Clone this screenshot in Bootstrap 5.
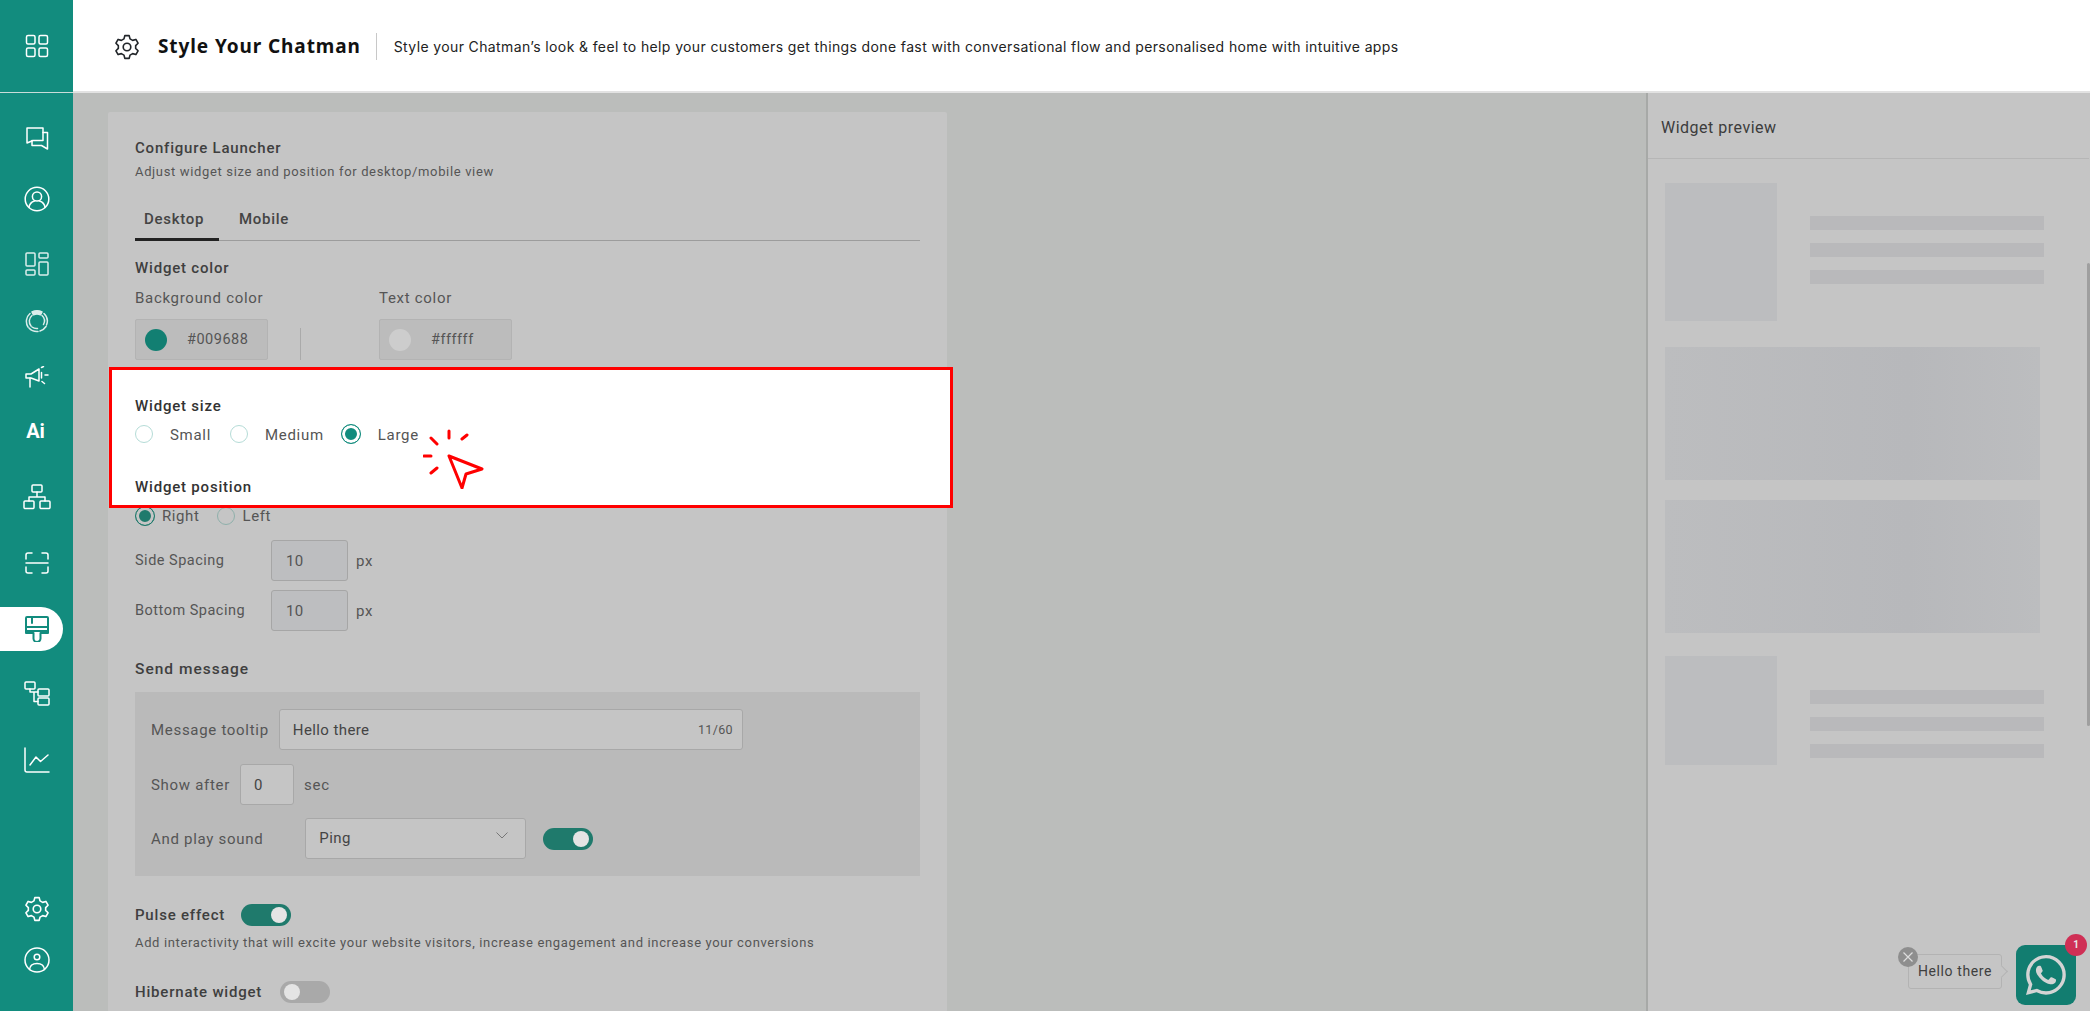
<!DOCTYPE html>
<html lang="en"><head><meta charset="utf-8"><title>Style Your Chatman</title>
<link href="https://cdn.jsdelivr.net/npm/bootstrap@5.3.0/dist/css/bootstrap.min.css" rel="stylesheet">
<style>
html,body{height:100%;overflow:hidden}
body{font-family:Roboto,"Liberation Sans",sans-serif;font-size:14px;color:#444;background:#bbbdbb}
svg{display:block}
.shell{height:1011px}
.rail{width:73px;background:#128c7e;flex:none}
.rail-head{height:93px;border-bottom:1px solid #c9dcd9}
.rail-item{height:44px;width:63px;display:flex;align-items:center;justify-content:center;color:#fff;padding-left:10px}
.rail-list .rail-item:nth-child(1){margin-top:23px}
.rail-list .rail-item:nth-child(2){margin-top:17px}
.rail-list .rail-item:nth-child(3){margin-top:21px}
.rail-list .rail-item:nth-child(4){margin-top:13px}
.rail-list .rail-item:nth-child(5){margin-top:12px}
.rail-list .rail-item:nth-child(6){margin-top:10px}
.rail-list .rail-item:nth-child(7){margin-top:22px}
.rail-list .rail-item:nth-child(8){margin-top:22px}
.rail-list .rail-item:nth-child(9){margin-top:22px}
.rail-list .rail-item:nth-child(10){margin-top:20px}
.rail-list .rail-item:nth-child(11){margin-top:23px}
.rail-active{background:#fff;color:#128c7e;border-radius:0 22px 22px 0}
.rail-ai{font-weight:700;font-size:20px;line-height:1;padding-left:8px}
.rail-foot{margin-top:auto;padding-bottom:29px;gap:7px}
.topbar{height:93px;background:#fff;border-bottom:2px solid #e2e2e2;padding:2px 0 0 41px;flex:none}
.top-title{font-family:"Noto Sans",sans-serif;font-weight:700;font-size:19px;letter-spacing:.9px;color:#111;margin-left:18px;padding-right:15px;line-height:27px;white-space:nowrap}
.top-sub{font-family:Inter,"Open Sans",sans-serif;font-size:14px;letter-spacing:.375px;color:#222;border-left:1px solid #c8c8c8;padding-left:17px;line-height:27px;white-space:nowrap}
.work{min-height:0;overflow:hidden}
.cfg-col{width:1573px;padding:19px 0 0 35px;flex:none}
.cfg-card{width:839px;height:900px;background:#c5c5c5;padding:26px 27px 0 27px;border-radius:2px}
.h-main{font-size:15px;font-weight:500;line-height:20px;letter-spacing:.8px;color:#3f3f3f}
.h-sub{font-size:13px;line-height:16px;margin-top:6px;color:#555;letter-spacing:.65px;white-space:nowrap}
.tabbar.nav{margin-top:20px;height:41px;border-bottom:1px solid #9c9c9c;gap:0}
.tabbar .nav-link{color:#444;font-size:15px;font-weight:500;padding:0 15px 0 9px;height:41px;line-height:38px;margin-right:11px;border:0;letter-spacing:.7px;border-radius:0}
.tabbar .nav-link.active{border-bottom:3px solid #222;background:transparent;color:#444}
.sec-head{font-size:15px;font-weight:500;line-height:20px;color:#3f3f3f;letter-spacing:.8px}
.sec-head-lg{font-size:15.5px;letter-spacing:1px}
.sec-a{margin-top:17px}
.lab{font-size:15px;line-height:20px;color:#555;letter-spacing:.7px}
.lab-row{margin-top:10px}
.lab-first{width:244px}
.color-row{margin-top:11px;height:41px}
.swatch-box{width:133px;height:41px;background:#bcbcbc;border:1px solid #b3b3b3;border-radius:2px;padding-left:9px;gap:20px;font-size:14.5px;color:#555;letter-spacing:.5px}
.dot{width:22px;height:22px;border-radius:50%;flex:none}
.dot-teal{background:#127f72}
.dot-white{background:#cdcdcd}
.v-rule{width:1px;height:32px;background:#aaa;margin:9px 78px 0 32px}
.spot{position:relative;z-index:2;margin:7px -33px 0 -26px;height:141px;background:#fff;border:3px solid #f00;padding:26px 0 0 23px}
.spot .sec-head{color:#333}
.radios{margin-top:7px;height:24px;color:#555}
.form-check-input.rdo{width:18px;height:18px;margin:0 17px 3px 0;border:1px solid #b5dcd7;background-color:#fff;background-image:none;flex:none}
.form-check-input.rdo:checked{width:20px;height:20px;background-color:#128c7e;border:1px solid #128c7e;box-shadow:inset 0 0 0 3px #fff}
.spot .form-check-input.rdo-gap{margin-left:19px}
.spot .form-check-input.rdo-gap-b{margin-left:17px}
.spot-second{margin-top:30px}
.rad-dim{margin-top:-2px;height:20px;color:#555;letter-spacing:.6px}
.form-check-input.rdo-d{width:20px;height:20px;margin:0 7px 0 0;border:1px solid #8fb0ab;background-color:#c5c5c5;background-image:none;flex:none}
.form-check-input.rdo-d:checked{background-color:#1f7a6c;border:1px solid #1f7a6c;box-shadow:inset 0 0 0 3px #c5c5c5}
.form-check-input.rdo-off{margin-left:18px;width:18px;height:18px}
.sp-row{height:41px}
.sp-one{margin-top:14px}
.sp-two{margin-top:9px}
.sp-lab{width:136px;letter-spacing:.5px;font-size:14.500px}
.form-control.num{width:77px;height:41px;background:#bdbec0;border:1px solid #a6a6a6;border-radius:3px;color:#555;font-size:15px;padding:0 14px;margin-right:8px;letter-spacing:.3px}
.sec-b{margin-top:28px}
.send-box{margin-top:13px;height:184px;width:785px;background:#bababa;padding:17px 16px 0 16px}
.send-row{height:41px}
.send-two{margin-top:14px}
.send-three{margin-top:13px}
.tip-wrap{width:464px;margin-left:10px}
.form-control.flat{height:41px;background:#c5c5c5;border:1px solid #a8a8a8;border-radius:3px;color:#444;font-size:15px;padding:0 13px;letter-spacing:.4px}
.count{right:10px;top:12px;font-size:12.5px;line-height:18px;letter-spacing:.3px;color:#555;z-index:3}
.form-control.small-num{width:54px;margin:0 10px}
.form-select.pick{width:221px;height:41px;margin-left:42px;background-color:#c5c5c5;border:1px solid #a8a8a8;border-radius:3px;color:#444;font-size:15px;letter-spacing:.4px;padding:0 13px;background-size:12px 7px;background-position:right 17px top 13px;background-image:url("data:image/svg+xml,%3Csvg xmlns='http://www.w3.org/2000/svg' viewBox='0 0 12 7'%3E%3Cpath d='M.5.5 6 6 11.5.5' fill='none' stroke='%23777'/%3E%3C/svg%3E")}
.sw{display:inline-block;position:relative;width:50px;height:22px;border-radius:11px;background:#1f7a6c;flex:none}
.sw::after{content:"";position:absolute;top:3px;right:4px;width:16px;height:16px;border-radius:50%;background:#e4e4e4}
.sw-off{background:#a9a9a9}
.sw-off::after{right:auto;left:4px}
.sw-a{margin-left:17px}
.pulse-row{margin-top:28px;height:22px}
.ml-sw{margin-left:16px}
.ml-sw-b{margin-left:18px}
.desc{font-size:13px;line-height:16px;margin-top:9px;color:#555;letter-spacing:.65px;white-space:nowrap}
.hib-row{margin-top:30px;height:22px}
.pv-col{width:444px;background:#c5c5c5;border-left:2px solid #a7a9a7;position:relative;flex:none}
.pv-head{height:66px;padding:25px 0 0 13px;border-bottom:1px solid #b6b6b6;font-size:16px;line-height:20px;color:#3c3c3c;letter-spacing:.5px;width:441px}
.pv-thumb{position:absolute;top:170px;right:0;width:3px;height:463px;background:#9f9f9f;border-radius:2px}
.skel{padding:24px 0 0 17px;filter:blur(.7px)}
.sk-img{width:112px;height:138px;background:#bcbdbf;flex:none}
.sk-img-cut{height:109px}
.sk-lines{margin-left:33px;padding-top:33px;width:234px}
.sk-lines-b{padding-top:34px}
.sk-line{height:14px;background:#b9b9bb;margin-bottom:13px}
.sk-block{width:375px;height:133px;margin-top:26px;background:linear-gradient(90deg,#bcbdbf 0,#b7b8bb 65%,#bcbdbf 100%)}
.sk-block-2{margin-top:20px}
.sk-row-last{margin-top:23px}
.wa-tip{position:absolute;left:260px;top:861px;width:94px;height:35px;border:1px solid #b3b3b3;border-radius:3px;font-size:14px;line-height:33px;padding-left:9px;color:#3f3f3f;letter-spacing:.6px;white-space:nowrap}
.wa-tip::after{content:"";position:absolute;right:-5px;top:12px;width:9px;height:9px;background:#c5c5c5;border-top:1px solid #b3b3b3;border-right:1px solid #b3b3b3;transform:rotate(45deg)}
.wa-x{position:absolute;left:250px;top:854px;width:20px;height:20px;border-radius:50%;background:#8e8e8e;z-index:2;display:flex;align-items:center;justify-content:center}
.wa-btn{position:absolute;left:368px;top:852px;width:60px;height:60px;background:#127d70;border-radius:9px;display:flex;align-items:center;justify-content:center}
.wa-badge{position:absolute;left:417px;top:841px;width:22px;height:22px;border-radius:50%;background:#cf2f55;color:#e6e6e6;font-size:10px;font-weight:700;line-height:22px;text-align:center;z-index:2}
.cursor-mark{position:absolute;left:311px;top:58px;width:62px;height:61px}
.i{fill:none;stroke:currentColor;stroke-width:1.5;stroke-linejoin:round;stroke-linecap:round}
.i-teal{color:#128c7e;stroke-width:2}
.i-dim{opacity:.85}
</style></head>
<body>
<div class="shell d-flex">
  <nav class="rail d-flex flex-column">
    <div class="rail-head d-flex align-items-center justify-content-center">
      <svg class="i text-white" width="24" height="24" viewBox="0 0 24 24"><rect x="1.5" y="1.5" width="8.5" height="8.5" rx="1.5"/><rect x="14" y="1.5" width="8.5" height="8.5" rx="1.5"/><rect x="1.5" y="14" width="8.5" height="8.5" rx="1.5"/><rect x="14" y="14" width="8.5" height="8.5" rx="1.5"/></svg>
    </div>
    <div class="rail-list d-flex flex-column">
      <div class="rail-item"><svg class="i" width="24" height="24" viewBox="0 0 24 24"><path d="M2 2H18V14.5H8L2 17Z"/><path d="M18 6.5H22.5V23L16.5 19.5H7V14.5"/></svg></div>
      <div class="rail-item"><svg class="i" width="26" height="26" viewBox="0 0 26 26"><circle cx="13" cy="13" r="11.8"/><circle cx="13" cy="10.5" r="4.6"/><path d="M5 21.5C5.5 17.5 8.5 15.6 10.5 15M21 21.5C20.5 17.5 17.500 15.600 15.500 15"/></svg></div>
      <div class="rail-item"><svg class="i i-dim" width="24" height="24" viewBox="0 0 24 24"><rect x="1" y="1" width="9" height="13" rx="1"/><rect x="14" y="1" width="9" height="5" rx="1"/><rect x="1" y="18" width="9" height="5" rx="1"/><rect x="14" y="10" width="9" height="13" rx="1"/></svg></div>
      <div class="rail-item"><svg class="i i-dim" width="24" height="24" viewBox="0 0 24 24" stroke-width="1.100"><path d="M7 3A10.500 10.500 0 0 1 17 3L15.500 5.800A7.500 7.500 0 0 0 8.500 5.800Z" fill="currentColor"/><path d="M5 4.500A10.500 10.500 0 0 0 3 18M4 19A10.500 10.500 0 0 0 13 22.500M15 22A10.500 10.500 0 0 0 21 17.500M21.500 16A10.500 10.500 0 0 0 19 4.500"/><path d="M7 6.500A7.500 7.500 0 0 0 6 17M7 18A7.500 7.500 0 0 0 12.500 19.500M17 6.500A7.500 7.500 0 0 1 18.500 15.500"/></svg></div>
      <div class="rail-item"><svg class="i" width="24" height="22" viewBox="0 0 24 22"><path d="M1 8H6L14 3V15L6 12H1Z"/><path d="M5 12V21"/><path d="M16.500 1.500 18.500 0.500M20 9H23M17 15.500 19.500 17.500M16.500 6.500V12"/></svg></div>
      <div class="rail-item rail-ai">Ai</div>
      <div class="rail-item"><svg class="i" width="28" height="26" viewBox="0 0 28 26"><rect x="9" y="1" width="10" height="7" rx="1"/><path d="M14 8V13M6 17V13H22V17"/><rect x="1" y="17" width="10" height="7.500" rx="1"/><rect x="17" y="17" width="10" height="7.500" rx="1"/></svg></div>
      <div class="rail-item"><svg class="i" width="24" height="22" viewBox="0 0 24 22"><path d="M1 7V3A2 2 0 0 1 3 1H7M17 1H21A2 2 0 0 1 23 3V7M1 15V19A2 2 0 0 0 3 21H7M17 21H21A2 2 0 0 0 23 19V15M1 11H23"/></svg></div>
      <div class="rail-item rail-active"><svg class="i i-teal" width="24" height="26" viewBox="0 0 24 26"><path d="M1 2A1 1 0 0 1 2 1H22A1 1 0 0 1 23 2V15H1Z"/><path d="M1 11H23M7 1V7"/><path d="M1 15V17H8.500V22.500A3.500 3.500 0 0 0 15.500 22.500V17H23V15"/></svg></div>
      <div class="rail-item"><svg class="i" width="26" height="25" viewBox="0 0 26 25"><rect x="1" y="1" width="10" height="7" rx="1"/><rect x="14" y="8" width="11" height="7" rx="1"/><rect x="14" y="17" width="11" height="7" rx="1"/><path d="M6 8V11H14M10 11V20.500H14"/></svg></div>
      <div class="rail-item"><svg class="i" width="26" height="26" viewBox="0 0 26 26"><path d="M1 1V23A2 2 0 0 0 3 25H25"/><path d="M6 18 12 10 16.500 14.500 24 8"/></svg></div>
    </div>
    <div class="rail-foot d-flex flex-column">
      <div class="rail-item"><svg class="i" width="26" height="26" viewBox="0 0 24 24"><circle cx="12" cy="12" r="3.500"/><path d="M10 1.500H14L14.800 4.500 17.200 5.900 20.200 5 22.200 8.500 20 10.700V13.300L22.200 15.500 20.200 19 17.200 18.100 14.800 19.500 14 22.500H10L9.200 19.500 6.800 18.100 3.800 19 1.800 15.500 4 13.300V10.700L1.800 8.500 3.800 5 6.800 5.900 9.200 4.500Z"/></svg></div>
      <div class="rail-item"><svg class="i" width="26" height="26" viewBox="0 0 26 26"><circle cx="13" cy="13" r="12"/><circle cx="13" cy="10" r="2.800"/><path d="M5.500 22.500C6 18 9 16.500 13 16.500S20 18 20.500 22.500"/></svg></div>
    </div>
  </nav>
  <div class="flex-grow-1 d-flex flex-column work">
    <header class="topbar d-flex align-items-center">
      <svg class="i text-dark" width="26" height="26" viewBox="0 0 24 24"><circle cx="12" cy="12" r="3.500"/><path d="M10 1.500H14L14.800 4.500 17.200 5.900 20.200 5 22.200 8.500 20 10.700V13.300L22.200 15.500 20.200 19 17.200 18.100 14.800 19.500 14 22.500H10L9.200 19.500 6.800 18.100 3.800 19 1.800 15.500 4 13.300V10.700L1.800 8.500 3.800 5 6.800 5.900 9.200 4.500Z"/></svg>
      <div class="top-title">Style Your Chatman</div>
      <div class="top-sub">Style your Chatman’s look &amp; feel to help your customers get things done fast with conversational flow and personalised home with intuitive apps</div>
    </header>
    <div class="d-flex flex-grow-1 work">
      <div class="cfg-col">
        <section class="cfg-card">
          <div class="h-main">Configure Launcher</div>
          <div class="h-sub">Adjust widget size and position for desktop/mobile view</div>
          <ul class="nav tabbar">
            <li class="nav-item"><a class="nav-link active" href="#">Desktop</a></li>
            <li class="nav-item"><a class="nav-link" href="#">Mobile</a></li>
          </ul>
          <div class="sec-head sec-a">Widget color</div>
          <div class="d-flex lab-row"><span class="lab lab-first">Background color</span><span class="lab">Text color</span></div>
          <div class="d-flex color-row">
            <div class="swatch-box d-flex align-items-center"><span class="dot dot-teal"></span>#009688</div>
            <div class="v-rule"></div>
            <div class="swatch-box d-flex align-items-center"><span class="dot dot-white"></span>#ffffff</div>
          </div>
          <div class="spot">
            <div class="sec-head">Widget size</div>
            <div class="radios d-flex align-items-center lab">
              <input class="form-check-input rdo" type="radio" name="sz" aria-label="Small"><span>Small</span>
              <input class="form-check-input rdo rdo-gap" type="radio" name="sz" aria-label="Medium"><span>Medium</span>
              <input class="form-check-input rdo rdo-gap-b" type="radio" name="sz" aria-label="Large" checked><span>Large</span>
            </div>
            <div class="sec-head spot-second">Widget position</div>
            <svg class="cursor-mark" viewBox="0 0 62 61" fill="none" stroke="#f00" stroke-width="3" stroke-linecap="round" stroke-linejoin="round"><path d="M26 28 59 41 43 46 39 60Z"/><path d="M26 3V10M39 11 44 7M8 10 14 16M1 28H8M8 45 14 40"/></svg>
          </div>
          <div class="rad-dim d-flex align-items-center lab">
            <input class="form-check-input rdo-d" type="radio" name="pos" aria-label="Right" checked><span>Right</span>
            <input class="form-check-input rdo-d rdo-off" type="radio" name="pos" aria-label="Left"><span>Left</span>
          </div>
          <div class="d-flex align-items-center sp-row sp-one lab"><span class="sp-lab">Side Spacing</span><input class="form-control num" value="10" aria-label="Side spacing"><span>px</span></div>
          <div class="d-flex align-items-center sp-row sp-two lab"><span class="sp-lab">Bottom Spacing</span><input class="form-control num" value="10" aria-label="Bottom spacing"><span>px</span></div>
          <div class="sec-head sec-head-lg sec-b">Send message</div>
          <div class="send-box">
            <div class="d-flex align-items-center send-row lab"><span>Message tooltip</span>
              <div class="position-relative tip-wrap"><input class="form-control flat" value="Hello there" aria-label="Message tooltip"><span class="position-absolute count">11/60</span></div>
            </div>
            <div class="d-flex align-items-center send-row send-two lab"><span>Show after</span><input class="form-control flat small-num" value="0" aria-label="Show after"><span>sec</span></div>
            <div class="d-flex align-items-center send-row send-three lab"><span>And play sound</span>
              <select class="form-select pick" aria-label="Sound"><option>Ping</option></select><span class="sw sw-a"></span>
            </div>
          </div>
          <div class="d-flex align-items-center pulse-row"><span class="sec-head">Pulse effect</span><span class="sw ml-sw"></span></div>
          <div class="desc">Add interactivity that will excite your website visitors, increase engagement and increase your conversions</div>
          <div class="d-flex align-items-center hib-row"><span class="sec-head">Hibernate widget</span><span class="sw sw-off ml-sw-b"></span></div>
        </section>
      </div>
      <aside class="pv-col">
        <div class="pv-head">Widget preview</div>
        <div class="pv-thumb"></div>
        <div class="skel">
          <div class="d-flex"><div class="sk-img"></div><div class="sk-lines"><div class="sk-line"></div><div class="sk-line"></div><div class="sk-line"></div></div></div>
          <div class="sk-block"></div>
          <div class="sk-block sk-block-2"></div>
          <div class="d-flex sk-row-last"><div class="sk-img sk-img-cut"></div><div class="sk-lines sk-lines-b"><div class="sk-line"></div><div class="sk-line"></div><div class="sk-line"></div></div></div>
        </div>
        <div class="wa-x"><svg width="10" height="10" viewBox="0 0 10 10" stroke="#ddd" stroke-width="1.200"><path d="M.5.5 9.500 9.500M9.500.5.5 9.500"/></svg></div>
        <div class="wa-tip">Hello there</div>
        <div class="wa-btn"><svg width="40" height="40" viewBox="0 0 16 16" fill="#d4d4d4"><path d="M13.601 2.326A7.854 7.854 0 0 0 7.994 0C3.627 0 .068 3.558.064 7.926c0 1.399.366 2.76 1.057 3.965L0 16l4.204-1.102a7.933 7.933 0 0 0 3.79.965h.004c4.368 0 7.926-3.558 7.93-7.93A7.898 7.898 0 0 0 13.6 2.326zM7.994 14.521a6.573 6.573 0 0 1-3.356-.92l-.24-.144-2.494.654.666-2.433-.156-.251a6.56 6.56 0 0 1-1.007-3.505c0-3.626 2.957-6.584 6.591-6.584a6.56 6.56 0 0 1 4.66 1.931 6.557 6.557 0 0 1 1.928 4.66c-.004 3.639-2.961 6.592-6.592 6.592zm3.615-4.934c-.197-.099-1.17-.578-1.353-.646-.182-.065-.315-.099-.445.099-.133.197-.513.646-.627.775-.114.133-.232.148-.43.05-.197-.1-.836-.308-1.592-.985-.59-.525-.985-1.175-1.103-1.372-.114-.198-.011-.304.088-.403.087-.088.197-.232.296-.346.1-.114.133-.198.198-.33.065-.134.034-.248-.015-.347-.05-.099-.445-1.076-.612-1.47-.16-.389-.323-.335-.445-.34-.114-.007-.247-.007-.38-.007a.729.729 0 0 0-.529.247c-.182.198-.691.677-.691 1.654 0 .977.71 1.916.81 2.049.098.133 1.394 2.132 3.383 2.992.47.205.84.326 1.129.418.475.152.904.129 1.246.08.38-.058 1.171-.48 1.338-.943.164-.464.164-.86.114-.943-.049-.084-.182-.133-.38-.232z"/></svg></div>
        <div class="wa-badge">1</div>
      </aside>
    </div>
  </div>
</div>
<script src="https://cdn.jsdelivr.net/npm/bootstrap@5.3.0/dist/js/bootstrap.bundle.min.js"></script>
</body></html>
